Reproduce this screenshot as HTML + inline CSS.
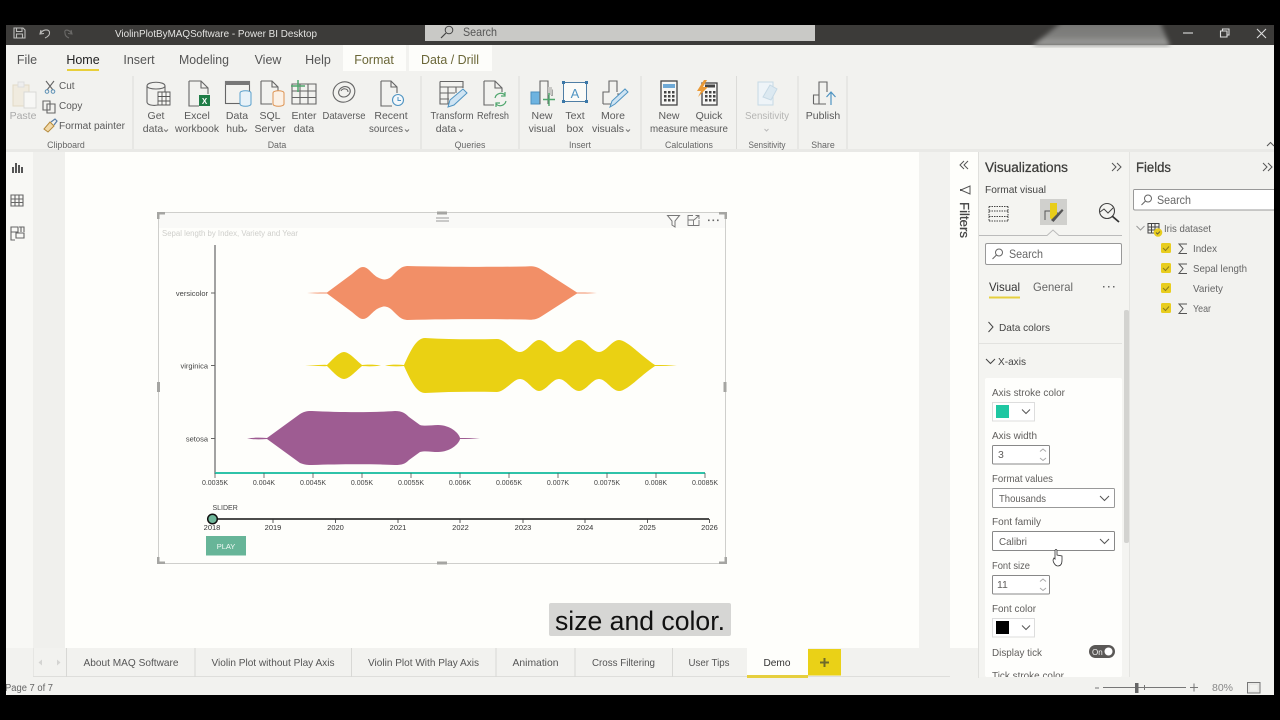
<!DOCTYPE html>
<html>
<head>
<meta charset="utf-8">
<title>ViolinPlotByMAQSoftware - Power BI Desktop</title>
<style>
html,body{margin:0;padding:0;background:#000;width:1280px;height:720px;overflow:hidden}
svg{display:block;filter:blur(0.3px)}
text{font-family:"Liberation Sans",sans-serif;fill:#555}
.r{font-size:10.5px;text-anchor:middle;fill:#5a5a5a}
.g{font-size:8.8px;text-anchor:middle;fill:#666}
.t{font-size:12.5px;text-anchor:middle;fill:#555}
.l{font-size:10.5px;fill:#605e5c}
.p{font-size:10.5px;text-anchor:middle;fill:#555}
.k{font-size:7px;text-anchor:middle;fill:#444}
.y{font-size:7.5px;text-anchor:middle;fill:#333}
.f{font-size:10.5px;fill:#666}
.i{fill:none;stroke:#666;stroke-width:1.1}
.d{fill:none;stroke:#777;stroke-width:1}
</style>
</head>
<body>
<svg width="1280" height="720" viewBox="0 0 1280 720" xmlns="http://www.w3.org/2000/svg">
<defs>
<filter id="b" x="-20%" y="-50%" width="140%" height="200%"><feGaussianBlur stdDeviation="2.500"/></filter>
<linearGradient id="bg" x1="0" y1="0" x2="0" y2="1"><stop offset="0" stop-color="#777775"/><stop offset="0.6" stop-color="#7f7f7d"/><stop offset="1" stop-color="#a8a8a5"/></linearGradient>
<clipPath id="tb"><rect x="6" y="25" width="1268" height="23"/></clipPath>
</defs>
<rect width="1280" height="720" fill="#000"/>
<!-- app -->
<rect x="6" y="25" width="1268" height="670" fill="#f2f2ef"/>
<!-- title bar -->
<rect x="6" y="25" width="1268" height="20" fill="#3c3b39"/>
<g clip-path="url(#tb)"><path d="M1032 46L1062 22H1160L1170 46Z" fill="url(#bg)" filter="url(#b)"/></g>
<g fill="none" stroke="#bdbdbb" stroke-width="1.1">
<path d="M14 28H23L25 30V38H14ZM16.500 28V31.500H22V28M16.500 38V34H22.500V38"/>
<path d="M41 30L40 34L44 33.500M40.500 33.500C43 29 48.500 29 49.500 32C50 35 47.500 37 45 38"/>
<path d="M71 30L72 34L68 33.500M71.500 33.500C69 29 63.500 29 65 33C65 35 66.500 37 69 38" stroke="#6b6a68"/>
</g>
<text x="115" y="37" font-size="10.5" style="fill:#e4e4e2" textLength="202" lengthAdjust="spacingAndGlyphs">ViolinPlotByMAQSoftware - Power BI Desktop</text>
<rect x="425" y="25" width="390" height="16" fill="#c9c9c6"/>
<circle cx="449" cy="30" r="3.800" fill="none" stroke="#444" stroke-width="1"/><path d="M446 33L441 38" stroke="#444" stroke-width="1.200"/>
<text x="463" y="36" font-size="12" style="fill:#555" textLength="34" lengthAdjust="spacingAndGlyphs">Search</text>
<g stroke="#ddd" stroke-width="1.100" fill="none">
<path d="M1183 33H1193"/>
<path d="M1220.500 31H1227V37H1220.500ZM1222.500 31V29H1229V35H1227"/>
<path d="M1257 29L1266 38M1266 29L1257 38"/>
</g>
<!-- ribbon tabs -->
<rect x="343" y="45" width="63" height="26" fill="#fdfdfa"/>
<rect x="409" y="45" width="83" height="26" fill="#fdfdfa"/>
<text class="t" x="27" y="64">File</text>
<text class="t" x="83" y="64" style="fill:#222">Home</text>
<rect x="67" y="69" width="32" height="2" fill="#e8cf3a"/>
<text class="t" x="139" y="64">Insert</text>
<text class="t" x="204" y="64" textLength="50" lengthAdjust="spacingAndGlyphs">Modeling</text>
<text class="t" x="268" y="64">View</text>
<text class="t" x="318" y="64">Help</text>
<text class="t" x="374" y="64" style="fill:#6b6738">Format</text>
<text class="t" x="450" y="64" style="fill:#6b6738" textLength="58" lengthAdjust="spacingAndGlyphs">Data / Drill</text>
<!-- ribbon dividers -->
<g stroke="#dcdcd9"><path d="M133 76V149M421 76V149M519 76V149M641 76V149M736.500 76V149M798 76V149M847 76V149"/></g>
<rect x="6" y="149" width="1268" height="3" fill="#e9e9e6"/>
<path d="M1267 146L1270.500 142.500L1274 146" fill="none" stroke="#555"/>
<!-- clipboard -->
<path d="M13 85H29V106H13Z" fill="#f0ebdf" stroke="#e2d9c5"/><rect x="18" y="82" width="6" height="5" fill="#eee" stroke="#ddd"/>
<rect x="24" y="92" width="12" height="16" fill="#f7f7f5" stroke="#d9d9d7"/>
<text class="r" x="23" y="119" style="fill:#aaa">Paste</text>
<path class="i" d="M46 81L53 90M54 81L47 90"/><circle cx="47" cy="91.500" r="1.800" fill="none" stroke="#5b8fb5"/><circle cx="53" cy="91.500" r="1.800" fill="none" stroke="#5b8fb5"/>
<path class="i" d="M43 101H50V110H43ZM47 104H55V113H47Z"/>
<path d="M44 129L50 122L54 126L48 132Z" fill="#f2d9a8" stroke="#b58a3c"/><path d="M51 122L55 119L57 121L54 125" fill="none" stroke="#5b7ea5" stroke-width="1.200"/>
<text class="r" x="59" y="89" style="text-anchor:start;font-size:10px">Cut</text>
<text class="r" x="59" y="109" style="text-anchor:start;font-size:10px">Copy</text>
<text class="r" x="59" y="129" style="text-anchor:start;font-size:10px" textLength="66" lengthAdjust="spacingAndGlyphs">Format painter</text>
<text class="g" x="66" y="148">Clipboard</text>
<!-- data group -->
<path class="i" d="M147 86V102C147 105 153 106 158 105M147 86C147 81 165 81 165 86V92M147 86C147 90 165 90 165 86"/>
<path d="M158 92H170V105H158ZM158 96.500H170M158 101H170M162 92V105M166 92V105" fill="#f7f7f4" stroke="#555" stroke-width="0.900"/>
<text class="r" x="156" y="119">Get</text><text class="r" x="153" y="132">data</text><path class="d" d="M164 129.500L166 131.500L168 129.500"/>
<path class="i" d="M189 81H201L208 88V94M201 81V88H208M189 81V106H199"/>
<rect x="199" y="95" width="11" height="11" fill="#1f7d47"/><text x="204.500" y="104" font-size="8" font-weight="bold" text-anchor="middle" style="fill:#fff">X</text>
<text class="r" x="197" y="119">Excel</text><text class="r" x="197" y="132" textLength="44" lengthAdjust="spacingAndGlyphs">workbook</text>
<rect x="225.500" y="81.500" width="24" height="22" class="i"/><rect x="225" y="81" width="25" height="4" fill="#777"/>
<path d="M240 93C240 90 251 90 251 93V104C251 107 240 107 240 104Z" fill="#e8f2f8" stroke="#5aa0cc"/>
<text class="r" x="237" y="119">Data</text><text class="r" x="235" y="132">hub</text><path class="d" d="M243 129.500L245 131.500L247 129.500"/>
<path class="i" d="M261 81H272L278 87V92M272 81V87H278M261 81V104H272"/>
<path d="M273 93C273 90 284 90 284 93V104C284 107 273 107 273 104Z" fill="#fbf1e6" stroke="#de9351"/>
<text class="r" x="270" y="119">SQL</text><text class="r" x="270" y="132">Server</text>
<path class="i" d="M292 84H316V104H292ZM292 91H316M292 97.500H316M300 84V104M308 84V104"/>
<path d="M298 80V92M291 86H305" stroke="#4fa66d" stroke-width="1.500"/>
<text class="r" x="304" y="119">Enter</text><text class="r" x="304" y="132">data</text>
<g class="i" fill="none" stroke="#666" stroke-width="1.100"><ellipse cx="344" cy="92" rx="11" ry="10" transform="rotate(-25 344 92)"/><ellipse cx="344.500" cy="92" rx="6" ry="5" transform="rotate(-25 344 92)"/><path d="M341 91C342 88 348 88 348 92"/></g>
<text class="r" x="344" y="119" textLength="43" lengthAdjust="spacingAndGlyphs">Dataverse</text>
<path class="i" d="M381 81H391L397 87V93M391 81V87H397M381 81V106H392"/>
<circle cx="398" cy="100" r="5.500" fill="#f4f8fb" stroke="#4f94c2" stroke-width="1.100"/><path d="M398 97V100.500H401" fill="none" stroke="#4f94c2"/>
<text class="r" x="391" y="119">Recent</text><text class="r" x="386" y="132" textLength="34" lengthAdjust="spacingAndGlyphs">sources</text><path class="d" d="M405 129.500L407 131.500L409 129.500"/>
<text class="g" x="277" y="148">Data</text>
<!-- queries -->
<path class="i" d="M440 81.500H463V88M440 81.500V104H449M440 87H463M440 93H455M440 99H449M448 87V104M456 87V93"/>
<path d="M448 107L450 100L463 89L467 93L454 105Z" fill="#cfe4f3" stroke="#4f94c2"/>
<text class="r" x="452" y="119" textLength="43" lengthAdjust="spacingAndGlyphs">Transform</text><text class="r" x="446" y="132">data</text><path class="d" d="M459 129.500L461 131.500L463 129.500"/>
<path class="i" d="M484 81H495L502 88V92M495 81V88H502M484 81V105H494"/>
<path d="M495 98A6 6 0 0 1 505 95M505 92V96H501M506 101A6 6 0 0 1 496 104M496 107V103H500" fill="none" stroke="#4fa66d" stroke-width="1.200"/>
<text class="r" x="493" y="119" textLength="32" lengthAdjust="spacingAndGlyphs">Refresh</text>
<text class="g" x="470" y="148">Queries</text>
<!-- insert -->
<rect x="531" y="92" width="9" height="12" fill="#6db3e0" stroke="#4a90c0"/><path class="i" d="M540 104V81H548V104M548 90H552V96"/><rect x="548" y="87" width="4" height="8" fill="#c8c8c5"/>
<path d="M549 93V106M543 99.500H555" stroke="#4fa66d" stroke-width="1.400"/>
<text class="r" x="542" y="119">New</text><text class="r" x="542" y="132">visual</text>
<rect x="563.500" y="82.500" width="23" height="19" fill="#fbfbf8" stroke="#4f7ea5"/>
<g fill="#3b78a8"><rect x="562" y="81" width="3" height="3"/><rect x="585" y="81" width="3" height="3"/><rect x="562" y="100" width="3" height="3"/><rect x="585" y="100" width="3" height="3"/></g>
<text x="575" y="98" font-size="13" text-anchor="middle" style="fill:#4f94c2">A</text>
<text class="r" x="575" y="119">Text</text><text class="r" x="575" y="132">box</text>
<path class="i" d="M603 104V92H609V81H617V92M617 94H622M603 104H612"/>
<path d="M610 107L612 101L625 89L628 92L615 104Z" fill="#cfe4f3" stroke="#4f94c2"/>
<text class="r" x="613" y="119">More</text><text class="r" x="608" y="132">visuals</text><path class="d" d="M626 129.500L628 131.500L630 129.500"/>
<text class="g" x="580" y="148">Insert</text>
<!-- calc -->
<rect x="661" y="81" width="16" height="24" fill="#f7f7f5" stroke="#444" stroke-width="1.300"/><rect x="663" y="84" width="12" height="4" fill="#6ea9d6"/>
<g fill="#444"><rect x="664" y="91" width="2.500" height="2.500"/><rect x="668" y="91" width="2.500" height="2.500"/><rect x="672" y="91" width="2.500" height="2.500"/><rect x="664" y="95" width="2.500" height="2.500"/><rect x="668" y="95" width="2.500" height="2.500"/><rect x="672" y="95" width="2.500" height="2.500"/><rect x="664" y="99" width="2.500" height="2.500"/><rect x="668" y="99" width="2.500" height="2.500"/><rect x="672" y="99" width="2.500" height="2.500"/></g>
<text class="r" x="669" y="119">New</text><text class="r" x="669" y="132" textLength="38" lengthAdjust="spacingAndGlyphs">measure</text>
<rect x="702" y="83" width="15" height="22" fill="#f7f7f5" stroke="#444" stroke-width="1.300"/>
<g fill="#444"><rect x="705" y="84.500" width="10" height="3"/><rect x="705" y="91" width="2.500" height="2.500"/><rect x="709" y="91" width="2.500" height="2.500"/><rect x="713" y="91" width="2.500" height="2.500"/><rect x="705" y="95" width="2.500" height="2.500"/><rect x="709" y="95" width="2.500" height="2.500"/><rect x="713" y="95" width="2.500" height="2.500"/><rect x="705" y="99" width="2.500" height="2.500"/><rect x="709" y="99" width="2.500" height="2.500"/><rect x="713" y="99" width="2.500" height="2.500"/></g>
<path d="M704 80L697 91H701L698 97L708 87H703L707 80Z" fill="#eb9a36"/>
<text class="r" x="709" y="119">Quick</text><text class="r" x="709" y="132" textLength="38" lengthAdjust="spacingAndGlyphs">measure</text>
<text class="g" x="689" y="148">Calculations</text>
<!-- sensitivity -->
<path d="M758 82H773V105H758Z" fill="#eef4f8" stroke="#c6d9e5"/><path d="M763 97L770 85L777 89L771 100Z" fill="#dce9f1" stroke="#c6d9e5"/>
<text class="r" x="767" y="119" style="fill:#b5b5b3" textLength="44" lengthAdjust="spacingAndGlyphs">Sensitivity</text><path d="M764.500 129L766.500 131L768.500 129" fill="none" stroke="#bbb"/>
<text class="g" x="767" y="148" textLength="37" lengthAdjust="spacingAndGlyphs">Sensitivity</text>
<!-- publish -->
<path class="i" d="M813.500 104V95H819V82H827V92M813.500 104H826M819 95V104"/>
<path d="M831 105V92M826.500 97L831 92L835.500 97" fill="none" stroke="#4f94c2" stroke-width="1.200"/>
<text class="r" x="823" y="119">Publish</text>
<text class="g" x="823" y="148">Share</text>
<!-- left nav -->
<rect x="6" y="152" width="27" height="496" fill="#f8f8f5"/>
<rect x="33" y="152" width="32" height="496" fill="#f0f0ed"/>
<g fill="#555"><rect x="12" y="167" width="2" height="6"/><rect x="15" y="163" width="2" height="10"/><rect x="18" y="165" width="2" height="8"/><rect x="21" y="167" width="2" height="6"/></g>
<path class="i" d="M11 195H23V206H11ZM11 199H23M11 202.500H23M15 195V206M19 195V206"/>
<path class="i" d="M11 227H18V232H11ZM16 233H24V238H16ZM11 232V240H15M21 227V232M19 227H24V232"/>
<!-- canvas -->
<rect x="65" y="152" width="854" height="496" fill="#fefefb"/>
<!-- visual frame -->
<rect x="158.500" y="212.500" width="567" height="351" fill="#fefefb" stroke="#cfcfcc"/>
<rect x="159" y="213" width="566" height="15" fill="#f9f9f7"/>
<text x="162" y="236" font-size="8" style="fill:#cfcfcb" textLength="136" lengthAdjust="spacingAndGlyphs">Sepal length by Index, Variety and Year</text>
<g fill="#a5a5a2">
<path d="M157 212H165V214.500H159.500V219H157Z"/>
<path d="M719 212H727V219H724.500V214.500H719Z"/>
<path d="M157 557H159.500V561.500H165V564H157Z"/>
<path d="M724.500 557H727V564H719V561.500H724.500Z"/>
<rect x="157" y="382" width="3" height="10"/><rect x="723.500" y="382" width="3" height="10"/>
<rect x="437" y="211.500" width="10" height="3"/><rect x="437" y="561.500" width="10" height="3"/>
</g>
<path d="M436 218H449M436 221H449" stroke="#999"/>
<path d="M667.500 215.500H679.500L675 221V227L672 225V221Z" fill="none" stroke="#777"/>
<path d="M693 215.500H688V225.500H699V220M688 220H693.500V225.500M694 220L699 215.500M695.500 215.500H699V219" fill="none" stroke="#777" stroke-width="0.900"/>
<g fill="#666"><rect x="708" y="219.500" width="1.600" height="1.600"/><rect x="712.500" y="219.500" width="1.600" height="1.600"/><rect x="717" y="219.500" width="1.600" height="1.600"/></g>
<!-- violins -->
<path fill="#f28f67" d="M307 293C314 292.500 322 292.500 327 292.500L352 274C358 269 360 267 363 267C368 267 371 273 377 277C381 279 383 279.500 384 279.500C386 279.500 389 279 392 276C398 270 401 266.500 407 266C450 267 490 267 525 266.500C532 266 536 266 542 270L577 292.500C585 292.500 590 292.500 597 293C590 293.500 585 293.500 577 293.500L542 316C536 320 532 320 525 319.500C490 319 450 319 407 320C401 319.500 398 316 392 310C389 307 386 306.500 384 306.500C383 306.500 381 307 377 309C371 313 368 319 363 319C360 319 358 317 352 312L327 293.500C322 293.500 314 293.500 307 293Z"/>
<path fill="#ead113" d="M305 365.500L325 364.800L327 365C332 360 339 352 344 352C349 352 356 360 362 365C367 364.500 375 364.500 381 365.500C375 366.500 367 366.500 362 366C356 371 349 379 344 379C339 379 332 371 327 366L325 366.200ZM385 365.500C391 364.500 398 364.500 404 365C410 352 416 338 425 338C450 339.500 475 339.500 497 339C505 339 513 352 520 352C527 352 533 340 539 340C546 340 552 352 559 352C566 352 572 340 579 340C586 340 592 352 599 352C606 352 612 340 619 340C627 340 640 355 655 365C662 365 670 365 677 365.500C670 366 662 366 655 366C640 376 627 391 619 391C612 391 606 379 599 379C592 379 586 391 579 391C572 391 566 379 559 379C552 379 546 391 539 391C533 391 527 379 520 379C513 379 505 392 497 392C475 391.500 450 391.500 425 393C416 393 410 379 404 366C398 366.500 391 366.500 385 365.500Z"/>
<path fill="#9e5c92" d="M247 438.500C253 437.500 260 437.500 267 438L300 414C305 411 308 411 312 411C340 412.500 375 412.500 395 411C402 411 405 413 409 417L420 425C425 426.500 432 425 438 425C450 425 459 433 460 438C466 438 473 438 480 438.500C473 439 466 439 460 439C459 444 450 452 438 452C432 452 425 450.500 420 452L409 460C405 464 402 465 395 465C375 464 340 464 312 465C308 465 305 465 300 463L267 439C260 439.500 253 439.500 247 438.500Z"/>
<!-- axis -->
<path d="M215 245V474" stroke="#666" stroke-width="1.200"/>
<path d="M211 293H215M211 365.500H215M211 438.500H215" stroke="#666"/>
<text x="208" y="296" font-size="7.500" text-anchor="end" style="fill:#444">versicolor</text>
<text x="208" y="368.500" font-size="7.500" text-anchor="end" style="fill:#444">virginica</text>
<text x="208" y="441.500" font-size="7.500" text-anchor="end" style="fill:#444">setosa</text>
<path d="M215 473H705" stroke="#2fc3a9" stroke-width="2"/>
<path d="M215 473V478M264 473V478M313 473V478M362 473V478M411 473V478M460 473V478M509 473V478M558 473V478M607 473V478M656 473V478M705 473V478" stroke="#555" stroke-width="0.800"/>
<g>
<text class="k" x="215" y="485">0.0035K</text><text class="k" x="264" y="485">0.004K</text><text class="k" x="313" y="485">0.0045K</text><text class="k" x="362" y="485">0.005K</text><text class="k" x="411" y="485">0.0055K</text><text class="k" x="460" y="485">0.006K</text><text class="k" x="509" y="485">0.0065K</text><text class="k" x="558" y="485">0.007K</text><text class="k" x="607" y="485">0.0075K</text><text class="k" x="656" y="485">0.008K</text><text class="k" x="705" y="485">0.0085K</text>
</g>
<!-- slider -->
<text x="212.500" y="510" font-size="7" style="fill:#444">SLIDER</text>
<path d="M212 519H709" stroke="#111" stroke-width="1.500"/>
<path d="M273 519V523M335.500 519V523M398 519V523M460 519V523M523 519V523M585 519V523M647.500 519V523M709.500 519V523" stroke="#333" stroke-width="0.800"/>
<text class="y" x="212" y="530">2018</text><text class="y" x="273" y="530">2019</text><text class="y" x="335.500" y="530">2020</text><text class="y" x="398" y="530">2021</text><text class="y" x="460.500" y="530">2022</text><text class="y" x="523" y="530">2023</text><text class="y" x="585" y="530">2024</text><text class="y" x="647.500" y="530">2025</text><text class="y" x="709.500" y="530">2026</text>
<circle cx="212.500" cy="519" r="4.800" fill="#6fb79a" stroke="#111" stroke-width="1.500"/>
<rect x="206" y="536" width="40" height="19.500" fill="#67b598"/>
<text x="226" y="549" font-size="7.500" text-anchor="middle" style="fill:#f2faf6">PLAY</text>
<!-- subtitle -->
<rect x="549" y="603" width="182" height="33" rx="2" fill="#d6d6d4"/>
<text x="555" y="630" font-size="27" style="fill:#111" textLength="170" lengthAdjust="spacingAndGlyphs">size and color.</text>
<!-- tabs -->
<rect x="33" y="648" width="1" height="29" fill="#e6e6e3"/>
<path d="M33 676.500H950" stroke="#dededb"/>
<path d="M66.500 648V677M195 648V677M351.500 648V677M496 648V677M575 648V677M672.500 648V677" stroke="#d8d8d5"/>
<path d="M42 659.500L38.500 662.500L42 665.500Z" fill="#d4d4d2"/><path d="M57 659.500L60.500 662.500L57 665.500Z" fill="#d4d4d2"/>
<text class="p" x="131" y="666" textLength="95" lengthAdjust="spacingAndGlyphs">About MAQ Software</text>
<text class="p" x="273" y="666" textLength="123" lengthAdjust="spacingAndGlyphs">Violin Plot without Play Axis</text>
<text class="p" x="423.500" y="666" textLength="111" lengthAdjust="spacingAndGlyphs">Violin Plot With Play Axis</text>
<text class="p" x="535.500" y="666" textLength="46" lengthAdjust="spacingAndGlyphs">Animation</text>
<text class="p" x="623.500" y="666" textLength="63" lengthAdjust="spacingAndGlyphs">Cross Filtering</text>
<text class="p" x="709" y="666" textLength="41" lengthAdjust="spacingAndGlyphs">User Tips</text>
<rect x="747" y="648" width="61" height="27" fill="#fefefb"/>
<rect x="747" y="675" width="61" height="3" fill="#e6cf3e"/>
<text class="p" x="777" y="666" style="fill:#333" textLength="27" lengthAdjust="spacingAndGlyphs">Demo</text>
<rect x="808" y="649" width="33" height="26.500" fill="#ead117"/>
<path d="M820 662.500H829M824.500 658V667" stroke="#6f6a2a" stroke-width="2"/>
<!-- status -->
<text x="5" y="691" font-size="10" style="fill:#666" textLength="48" lengthAdjust="spacingAndGlyphs">Page 7 of 7</text>
<rect x="0" y="677" width="6" height="18" fill="#000"/>
<!-- filters -->
<rect x="950" y="152" width="28" height="496" fill="#fefefb"/>
<path d="M978.500 152V678" stroke="#e0e0dd"/>
<path d="M964 161L960 165L964 169M968 161L964 165L968 169" fill="none" stroke="#555"/>
<path d="M970 186V194L962 190.500H960.500V189.500H962Z" fill="none" stroke="#555"/>
<text transform="translate(960 202) rotate(90)" font-size="12.5" style="fill:#444;stroke:#444;stroke-width:0.25" textLength="36" lengthAdjust="spacingAndGlyphs">Filters</text>
<!-- visualizations panel -->
<rect x="979" y="152" width="150" height="526" fill="#f4f4f1"/>
<text x="985" y="172" font-size="13.5" style="fill:#3c3c3a;stroke:#3c3c3a;stroke-width:0.25" textLength="83" lengthAdjust="spacingAndGlyphs">Visualizations</text>
<path d="M1112 163L1116 167L1112 171M1117 163L1121 167L1117 171" fill="none" stroke="#555"/>
<text x="985" y="193" font-size="10.500" style="fill:#444" textLength="61" lengthAdjust="spacingAndGlyphs">Format visual</text>
<path d="M989 206.500H1008M989 216.500H1008M989 206.500V221M1008 206.500V221M989 221H1008M989 211H1008" fill="none" stroke="#444" stroke-dasharray="1.500 1"/>
<rect x="1040" y="199" width="27" height="26" fill="#d0d0cd"/>
<path d="M1045 220V211H1050M1057 212V214" fill="none" stroke="#555"/>
<path d="M1050 203H1057V216L1053 221L1050 218Z" fill="#e8cd1a"/>
<path d="M1051 220L1062 209L1063.500 210.500L1053.500 222Z" fill="#555"/>
<circle cx="1107" cy="211" r="7.500" fill="none" stroke="#444" stroke-width="1.100"/><path d="M1100 212L1104 209L1108 213L1113 208" fill="none" stroke="#444"/><path d="M1112 216L1119 222" stroke="#333" stroke-width="1.800"/>
<path d="M979 235.500H1047L1053 230L1059 235.500H1122" fill="none" stroke="#bbb"/>
<rect x="985.500" y="243.500" width="136" height="21" rx="1.500" fill="#fff" stroke="#999"/>
<circle cx="999" cy="252.500" r="3.500" fill="none" stroke="#666"/><path d="M996.500 255L992.500 259" stroke="#666"/>
<text x="1009" y="258" font-size="12" style="fill:#666" textLength="34" lengthAdjust="spacingAndGlyphs">Search</text>
<text x="989" y="291" font-size="12" style="fill:#333" textLength="31" lengthAdjust="spacingAndGlyphs">Visual</text>
<rect x="989" y="296.500" width="31" height="2" fill="#e6cf3e"/>
<text x="1033" y="291" font-size="12" style="fill:#666" textLength="40" lengthAdjust="spacingAndGlyphs">General</text>
<g fill="#666"><rect x="1103" y="286" width="1.500" height="1.500"/><rect x="1108" y="286" width="1.500" height="1.500"/><rect x="1113" y="286" width="1.500" height="1.500"/></g>
<path d="M988.500 322L993 327L988.500 332" fill="none" stroke="#444"/>
<text x="999" y="331" font-size="10.500" style="fill:#444" textLength="51" lengthAdjust="spacingAndGlyphs">Data colors</text>
<path d="M979 343.500H1122" stroke="#e2e2df"/>
<path d="M986 359L990.500 363.500L995 359" fill="none" stroke="#444"/>
<text x="998" y="365" font-size="10.500" style="fill:#444" textLength="28" lengthAdjust="spacingAndGlyphs">X-axis</text>
<rect x="1124" y="310" width="5" height="233" rx="2" fill="#d3d3d0"/>
<rect x="985" y="378" width="137" height="299" rx="2" fill="#fefefc"/>
<text class="l" x="992" y="396" textLength="73" lengthAdjust="spacingAndGlyphs">Axis stroke color</text>
<rect x="992.500" y="402.500" width="42" height="18.500" fill="#fff" stroke="#ddd"/>
<rect x="996" y="405" width="13" height="13" fill="#1fc7a2"/>
<path d="M1022 409.500L1026 413.500L1030 409.500" fill="none" stroke="#555"/>
<text class="l" x="992" y="439" textLength="45" lengthAdjust="spacingAndGlyphs">Axis width</text>
<rect x="992.500" y="445.500" width="57" height="18.500" rx="1" fill="#fff" stroke="#888"/>
<text class="l" x="998" y="458">3</text>
<path d="M1040 451.500L1043 449L1046 451.500M1040 458L1043 460.500L1046 458" fill="none" stroke="#aaa"/>
<text class="l" x="992" y="482" textLength="61" lengthAdjust="spacingAndGlyphs">Format values</text>
<rect x="992.500" y="488.500" width="122" height="19" rx="1" fill="#fff" stroke="#999"/>
<text class="l" x="999" y="502" textLength="47" lengthAdjust="spacingAndGlyphs">Thousands</text>
<path d="M1100 496L1104.500 500.500L1109 496" fill="none" stroke="#555"/>
<text class="l" x="992" y="525" textLength="49" lengthAdjust="spacingAndGlyphs">Font family</text>
<rect x="992.500" y="531.500" width="122" height="19" rx="1" fill="#fff" stroke="#888"/>
<text class="l" x="999" y="545" textLength="28" lengthAdjust="spacingAndGlyphs">Calibri</text>
<path d="M1100 539L1104.500 543.500L1109 539" fill="none" stroke="#555"/>
<text class="l" x="992" y="569" textLength="38" lengthAdjust="spacingAndGlyphs">Font size</text>
<rect x="992.500" y="575.500" width="57" height="18.500" rx="1" fill="#fff" stroke="#888"/>
<text class="l" x="997" y="588">11</text>
<path d="M1040 581.500L1043 579L1046 581.500M1040 588L1043 590.500L1046 588" fill="none" stroke="#aaa"/>
<text class="l" x="992" y="612" textLength="44" lengthAdjust="spacingAndGlyphs">Font color</text>
<rect x="992.500" y="618.500" width="42" height="18.500" fill="#fff" stroke="#ddd"/>
<rect x="996" y="621" width="13" height="13" fill="#000"/>
<path d="M1022 625.500L1026 629.500L1030 625.500" fill="none" stroke="#555"/>
<text class="l" x="992" y="656" textLength="50" lengthAdjust="spacingAndGlyphs">Display tick</text>
<rect x="1089" y="645" width="26" height="13" rx="6.500" fill="#5a5856"/>
<text x="1092" y="655" font-size="8" style="fill:#f5f5f5">On</text><circle cx="1108.500" cy="651.500" r="4" fill="#fff"/>
<clipPath id="cp"><rect x="985" y="660" width="137" height="17"/></clipPath>
<text class="l" x="992" y="679" clip-path="url(#cp)" textLength="72" lengthAdjust="spacingAndGlyphs">Tick stroke color</text>
<path d="M1062 560C1062 565 1060 566 1058 566C1055 566 1053 562 1053 560L1054 558L1055 559V551C1055 549 1057 549 1057 551V555L1062 556Z" fill="#fff" stroke="#333" stroke-width="0.800"/>
<!-- fields panel -->
<path d="M1129.500 152V678" stroke="#e4e4e1"/>
<text x="1136" y="172" font-size="13.5" style="fill:#3c3c3a;stroke:#3c3c3a;stroke-width:0.25" textLength="35" lengthAdjust="spacingAndGlyphs">Fields</text>
<path d="M1263 163L1267 167L1263 171M1268 163L1272 167L1268 171" fill="none" stroke="#555"/>
<path d="M1274 189.500H1134.500C1133.500 189.500 1133.500 190 1133.500 191V208.500C1133.500 209.500 1134 210 1135 210H1274" fill="#fff" stroke="#999"/>
<circle cx="1148" cy="198.500" r="3.500" fill="none" stroke="#666"/><path d="M1145.500 201L1141.500 205" stroke="#666"/>
<text x="1157" y="204" font-size="12" style="fill:#666" textLength="34" lengthAdjust="spacingAndGlyphs">Search</text>
<path d="M1136.500 226L1140.500 230L1144.500 226" fill="none" stroke="#999"/>
<path d="M1148 223.500H1159V233H1148ZM1148 227H1159M1148 230H1159M1151.500 223.500V233M1155 223.500V233" fill="none" stroke="#444"/>
<circle cx="1158" cy="232.500" r="4.300" fill="#e8cd1e"/><path d="M1156 232.500L1157.500 234L1160 231.500" fill="none" stroke="#444" stroke-width="0.800"/>
<text class="f" x="1164" y="232" textLength="47" lengthAdjust="spacingAndGlyphs">Iris dataset</text>
<g fill="#e8cd1e"><rect x="1161" y="243" width="10" height="10" rx="1.500"/><rect x="1161" y="263" width="10" height="10" rx="1.500"/><rect x="1161" y="283" width="10" height="10" rx="1.500"/><rect x="1161" y="303" width="10" height="10" rx="1.500"/></g>
<path d="M1163 248L1165.500 250.500L1169 246.500M1163 268L1165.500 270.500L1169 266.500M1163 288L1165.500 290.500L1169 286.500M1163 308L1165.500 310.500L1169 306.500" fill="none" stroke="#8a7d1e"/>
<path d="M1187 244H1179L1183 248.500L1179 253.500H1187M1187 264H1179L1183 268.500L1179 273.500H1187M1187 304H1179L1183 308.500L1179 313.500H1187" fill="none" stroke="#555"/>
<text class="f" x="1193" y="252" textLength="24" lengthAdjust="spacingAndGlyphs">Index</text>
<text class="f" x="1193" y="272" textLength="54" lengthAdjust="spacingAndGlyphs">Sepal length</text>
<text class="f" x="1193" y="292" textLength="30" lengthAdjust="spacingAndGlyphs">Variety</text>
<text class="f" x="1193" y="312" textLength="18" lengthAdjust="spacingAndGlyphs">Year</text>
<!-- status right -->
<rect x="1129" y="677" width="145" height="18" fill="#f2f2ef"/>
<rect x="979" y="677" width="150" height="18" fill="#f2f2ef"/>
<path d="M1095 688H1099M1103 687.500H1186M1190 687.500H1198M1194 683.500V691.500M1144.500 685V690" stroke="#777"/>
<rect x="1135" y="683" width="3.500" height="10" fill="#666"/>
<text x="1212" y="691" font-size="10.500" style="fill:#888">80%</text>
<rect x="1247.500" y="682.500" width="12.500" height="10.500" fill="#e8e8e5" stroke="#777"/>
<rect x="1250" y="685" width="7.500" height="5.500" fill="#f2f2ef"/>
</svg>
</body>
</html>
